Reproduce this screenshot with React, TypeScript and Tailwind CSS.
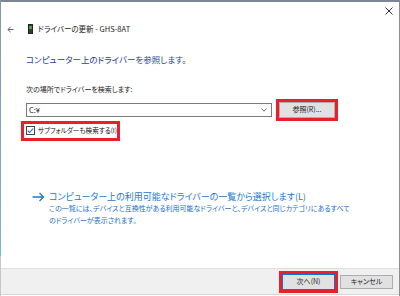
import React from "react";

const jp = "font-['Meiryo_UI','Noto_Sans_CJK_JP',sans-serif] [font-feature-settings:'palt']";

export default function App() {
  return (
    <div className={`w-[400px] h-[296px] overflow-hidden bg-white relative flex flex-col ${jp}`}>
      {/* window frame lines */}
      <div className="absolute left-0 top-0 w-full h-[2px] bg-[#7b8794]" />
      <div className="absolute left-0 top-0 w-[1px] h-[256px] bg-gradient-to-b from-[#8a96a3] to-[#74b4e4]" />
      <div className="absolute left-0 top-[256px] w-[1px] h-[40px] bg-[#c8c8c8]" />
      <div className="absolute right-0 top-0 w-[1px] h-full bg-[#8a8f96]" />

      {/* title bar */}
      <div className="h-[20px] shrink-0 flex justify-end items-center pr-[7px] pt-[2px]">
        <svg width="8" height="8" viewBox="0 0 8 8">
          <path d="M0.5 0.5 L7.5 7.5 M7.5 0.5 L0.5 7.5" stroke="#333" strokeWidth="1" />
        </svg>
      </div>

      {/* header row */}
      <div className="h-[18px] shrink-0 flex items-center pl-[7px]">
        <svg width="7" height="7" viewBox="0 0 7 7" className="mr-[14px] shrink-0">
          <path d="M6.5 3.5 H1 M3.6 0.8 L0.9 3.5 L3.6 6.2" stroke="#666" strokeWidth="1" fill="none" />
        </svg>
        <svg width="5" height="10" viewBox="0 0 5 10" className="mr-[5px] shrink-0">
          <rect x="0.5" y="0.5" width="4" height="9" fill="#3a3a3a" stroke="#222" />
          <rect x="1.3" y="2" width="2.4" height="3" fill="#3ec04a" />
        </svg>
        <span className="text-[7.5px] leading-none text-[#222] whitespace-nowrap">ドライバーの更新 - GHS-8AT</span>
      </div>

      {/* content */}
      <div className="flex-1 flex flex-col pl-[26px]">
        <div className="mt-[17px] text-[8.5px] leading-none text-[#2740a8] whitespace-nowrap">
          コンピューター上のドライバーを参照します。
        </div>

        <div className="mt-[22px] text-[7px] leading-none text-[#222] whitespace-nowrap">
          次の場所でドライバーを検索します:
        </div>

        <div className="mt-[6px] flex items-center">
          <div className="w-[246px] h-[14px] border border-[#7a7a7a] flex items-center justify-between pl-[2px] pr-[4px]">
            <span className="text-[7.5px] leading-none text-[#111]">C:¥</span>
            <svg width="6" height="4" viewBox="0 0 6 4">
              <path d="M0.5 0.8 L3 3.2 L5.5 0.8" stroke="#555" strokeWidth="0.9" fill="none" />
            </svg>
          </div>
          <div className="ml-[4px] border-[3px] border-[#e8202a] p-0">
            <div className="w-[56px] h-[16px] bg-[#e1e1e1] border border-[#adadad] flex items-center justify-center text-[7px] leading-none text-[#222]">
              参照(R)...
            </div>
          </div>
        </div>

        <div className="-ml-[5px] w-[99px] h-[20px] border-[3px] border-[#e8202a] flex items-center pl-[2px]">
          <svg width="9" height="9" viewBox="0 0 9 9" className="mr-[3px] shrink-0">
            <rect x="0.5" y="0.5" width="8" height="8" fill="#fff" stroke="#444" />
            <path d="M1.8 4.6 L3.6 6.5 L7.2 2.5" stroke="#2b63b8" strokeWidth="1.1" fill="none" />
          </svg>
          <span className="text-[6.6px] leading-none text-[#111] whitespace-nowrap">サブフォルダーも検索する(I)</span>
        </div>

        <div className="mt-[51px] flex items-start pl-[6px]">
          <svg width="13" height="10" viewBox="0 0 13 10" className="mr-[4px] mt-[0px] shrink-0">
            <path d="M0.5 5 H11.5 M7.5 1 L11.5 5 L7.5 9" stroke="#1a7ad4" strokeWidth="1.3" fill="none" />
          </svg>
          <div className="flex flex-col">
            <div className="text-[9px] leading-none text-[#1a7ad4] whitespace-nowrap">
              コンピューター上の利用可能なドライバーの一覧から選択します(L)
            </div>
            <div className="mt-[1px] text-[7px] leading-[12px] text-[#1a6fd0] whitespace-nowrap">
              この一覧には、デバイスと互換性がある利用可能なドライバーと、デバイスと同じカテゴリにあるすべて
              <br />
              のドライバーが表示されます。
            </div>
          </div>
        </div>
      </div>

      {/* footer */}
      <div className="h-[27px] shrink-0 bg-[#f0f0f0] border-t border-[#dfdfdf] border-b border-b-[#d6d6d6] flex items-center justify-end pr-[7px] mb-[1px]">
        <div className="border-[3px] border-[#e8202a]">
          <div className="w-[53px] h-[16px] bg-[#e1e1e1] border border-[#0078d7] flex items-center justify-center text-[7px] leading-none text-[#222]">
            次へ(N)
          </div>
        </div>
        <div className="ml-[2px] w-[53px] h-[14px] bg-[#e1e1e1] border border-[#adadad] flex items-center justify-center text-[7px] leading-none text-[#222]">
          キャンセル
        </div>
      </div>
    </div>
  );
}
